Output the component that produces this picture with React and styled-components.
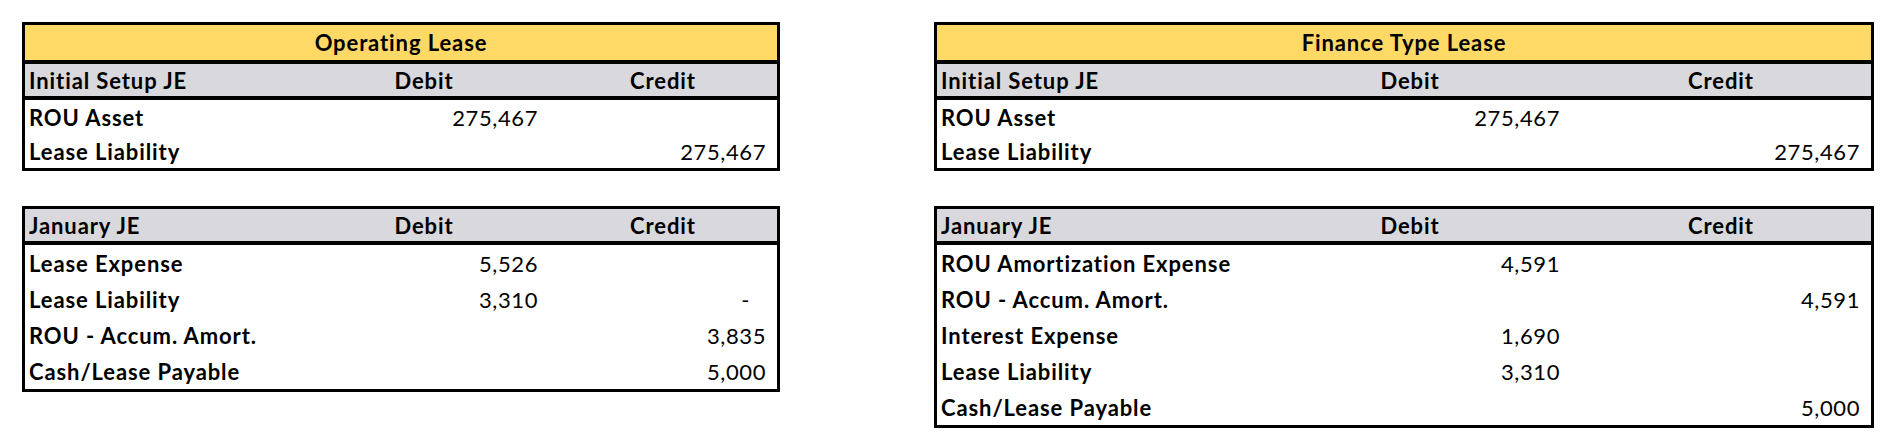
import React from "react";
import styled, { createGlobalStyle } from "styled-components";

const GlobalStyle = createGlobalStyle`
  html, body { margin: 0; padding: 0; background: #ffffff; }
  body { font-family: Lato, "Open Sans", "Liberation Sans", sans-serif; color: #000; }
`;

const Page = styled.div`
  display: flex;
  align-items: flex-start;
  gap: 154px;
  padding: 22px 0 0 22px;
`;

const Column = styled.div`
  display: flex;
  flex-direction: column;
  gap: 35px;
`;

const Table = styled.div`
  width: ${(p) => p.$width}px;
  box-sizing: border-box;
  border: 3px solid #000;
  background: #fff;
`;

const Title = styled.div`
  height: 35px;
  background: #fed966;
  border-bottom: 4px solid #000;
  display: flex;
  align-items: center;
  justify-content: center;
  font-weight: 700;
  font-size: 22px;
  letter-spacing: 0.9px;
`;

const Row = styled.div`
  display: grid;
  grid-template-columns: ${(p) => p.$cols};
  height: ${(p) => p.$h}px;
  align-items: center;
  font-size: 22px;
  letter-spacing: 0.9px;
`;

const HeaderRow = styled(Row)`
  background: #d9d8dc;
  border-bottom: 4px solid #000;
  font-weight: 700;
`;

const Label = styled.div`
  padding-left: 4px;
  font-weight: 700;
  white-space: nowrap;
`;

const HeadCell = styled.div`
  text-align: center;
  font-weight: 700;
`;

const Value = styled.div`
  text-align: right;
  padding-right: ${(p) => (p.$dash ? 27 : 11)}px;
  font-weight: 400;
  letter-spacing: 0.6px;
`;

function LeaseTable({ title, heading, width, cols, rowH, rows }) {
  return (
    <Table $width={width}>
      {title && <Title>{title}</Title>}
      <HeaderRow $cols={cols} $h={32}>
        <Label>{heading}</Label>
        <HeadCell>Debit</HeadCell>
        <HeadCell>Credit</HeadCell>
      </HeaderRow>
      {rows.map(([label, debit, credit]) => (
        <Row key={label} $cols={cols} $h={rowH}>
          <Label>{label}</Label>
          <Value>{debit}</Value>
          <Value $dash={credit === "-"}>{credit}</Value>
        </Row>
      ))}
    </Table>
  );
}

const LEFT_COLS = "274px 250px 228px";
const RIGHT_COLS = "312px 322px 300px";

export default function App() {
  return (
    <>
      <GlobalStyle />
      <Page>
        <Column>
          <LeaseTable
            title="Operating Lease"
            heading="Initial Setup JE"
            width={758}
            cols={LEFT_COLS}
            rowH={34}
            rows={[
              ["ROU Asset", "275,467", ""],
              ["Lease Liability", "", "275,467"],
            ]}
          />
          <LeaseTable
            heading="January JE"
            width={758}
            cols={LEFT_COLS}
            rowH={36}
            rows={[
              ["Lease Expense", "5,526", ""],
              ["Lease Liability", "3,310", "-"],
              ["ROU - Accum. Amort.", "", "3,835"],
              ["Cash/Lease Payable", "", "5,000"],
            ]}
          />
        </Column>
        <Column>
          <LeaseTable
            title="Finance Type Lease"
            heading="Initial Setup JE"
            width={940}
            cols={RIGHT_COLS}
            rowH={34}
            rows={[
              ["ROU Asset", "275,467", ""],
              ["Lease Liability", "", "275,467"],
            ]}
          />
          <LeaseTable
            heading="January JE"
            width={940}
            cols={RIGHT_COLS}
            rowH={36}
            rows={[
              ["ROU Amortization Expense", "4,591", ""],
              ["ROU - Accum. Amort.", "", "4,591"],
              ["Interest Expense", "1,690", ""],
              ["Lease Liability", "3,310", ""],
              ["Cash/Lease Payable", "", "5,000"],
            ]}
          />
        </Column>
      </Page>
    </>
  );
}
